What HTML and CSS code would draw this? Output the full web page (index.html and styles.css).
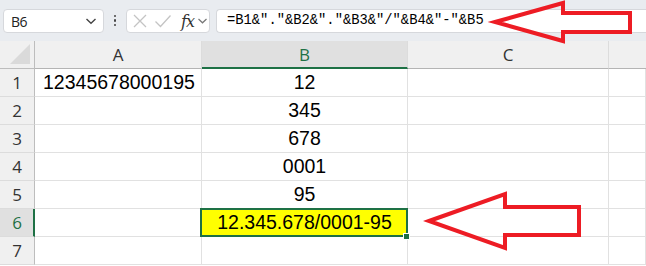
FILE: index.html
```html
<!DOCTYPE html>
<html>
<head>
<meta charset="utf-8">
<link rel="stylesheet" href="styles.css">
</head>
<body>
<div class="app">
  <div class="toolbar">
    <div class="namebox">
      <span class="nb-text">B6</span>
      <svg class="chev" width="12" height="8" viewBox="0 0 12 8"><path d="M1.5 2 L6 6.2 L10.5 2" fill="none" stroke="#444" stroke-width="1.4"/></svg>
    </div>
    <div class="dots"><i></i><i></i><i></i></div>
    <div class="fxbox">
      <svg width="16" height="16" viewBox="0 0 16 16"><path d="M2 2 L14 14 M14 2 L2 14" stroke="#c4c4c4" stroke-width="1.3" fill="none"/></svg>
      <svg width="18" height="16" viewBox="0 0 18 16"><path d="M1.5 8.5 L6.5 13.5 L16.5 2.5" stroke="#c4c4c4" stroke-width="1.3" fill="none"/></svg>
      <span class="fx">fx</span>
      <svg class="chev2" width="11" height="8" viewBox="0 0 11 8"><path d="M1.5 2 L5.5 5.8 L9.5 2" fill="none" stroke="#777" stroke-width="1.2"/></svg>
    </div>
    <div class="formula">=B1&amp;"."&amp;B2&amp;"."&amp;B3&amp;"/"&amp;B4&amp;"-"&amp;B5</div>
  </div>
  <div class="sheet">
    <div class="corner"><span class="tri"></span></div>
    <div class="colhead">A</div>
    <div class="colhead sel">B</div>
    <div class="colhead">C</div>
    <div class="colhead last"></div>

    <div class="rowhead">1</div><div class="cell left">12345678000195</div><div class="cell center">12</div><div class="cell"></div><div class="cell"></div>
    <div class="rowhead">2</div><div class="cell"></div><div class="cell center">345</div><div class="cell"></div><div class="cell"></div>
    <div class="rowhead">3</div><div class="cell"></div><div class="cell center">678</div><div class="cell"></div><div class="cell"></div>
    <div class="rowhead">4</div><div class="cell"></div><div class="cell center">0001</div><div class="cell"></div><div class="cell"></div>
    <div class="rowhead">5</div><div class="cell"></div><div class="cell center">95</div><div class="cell"></div><div class="cell"></div>
    <div class="rowhead sel">6</div><div class="cell"></div><div class="cell center active">12.345.678/0001-95</div><div class="cell"></div><div class="cell"></div>
    <div class="rowhead">7</div><div class="cell"></div><div class="cell"></div><div class="cell"></div><div class="cell"></div>
  </div>
  <svg class="arrows" width="646" height="266" viewBox="0 0 646 266">
    <polygon points="495,22 563,3 563,13 630,13 630,32 563,32 563,41" fill="none" stroke="#ed1c24" stroke-width="4" stroke-linejoin="miter"/>
    <polygon points="429,221 505,194 505,207 579,207 579,235 505,235 505,248" fill="none" stroke="#ed1c24" stroke-width="4" stroke-linejoin="miter"/>
  </svg>
</div>
</body>
</html>
```
FILE: styles.css
```css
html, body {
  margin: 0;
  padding: 0;
  background: #ffffff;
}
.app {
  position: relative;
  width: 646px;
  height: 266px;
  overflow: hidden;
  font-family: "Open Sans", "Noto Sans", sans-serif;
}
.toolbar {
  height: 41px;
  background: #e9ecf0;
  display: flex;
  align-items: center;
  padding-left: 3px;
  box-sizing: border-box;
}
.namebox {
  width: 101px;
  height: 24px;
  box-sizing: border-box;
  background: #fff;
  border: 1px solid #d6d8dc;
  border-radius: 4px;
  display: flex;
  align-items: center;
  justify-content: space-between;
  padding: 0 6px 0 7px;
  margin-top: 1px;
}
.nb-text {
  font-size: 14px;
  color: #222;
  letter-spacing: -0.5px;
}
.dots {
  width: 22px;
  display: flex;
  flex-direction: column;
  align-items: center;
  gap: 2px;
}
.dots i {
  display: block;
  width: 2.5px;
  height: 2.5px;
  background: #444;
  border-radius: 1px;
}
.fxbox {
  width: 84px;
  height: 24px;
  box-sizing: border-box;
  background: #fff;
  border: 1px solid #d6d8dc;
  border-radius: 4px;
  display: flex;
  align-items: center;
  padding-left: 5px;
  gap: 6px;
  margin-top: 1px;
}
.fx {
  font-family: "DejaVu Serif", "Liberation Serif", serif;
  font-style: italic;
  font-size: 16px;
  color: #333;
  margin-left: 3px;
  letter-spacing: -1px;
}
.chev2 {
  margin-left: -3px;
}
.formula {
  margin-left: 6px;
  flex: 1;
  height: 24px;
  box-sizing: border-box;
  background: #fff;
  border: 1px solid #d6d8dc;
  border-right: none;
  border-radius: 4px 0 0 4px;
  margin-top: 1px;
  padding-left: 10px;
  font-family: "Liberation Mono", monospace;
  font-size: 13.8px;
  line-height: 22px;
  color: #000;
  white-space: nowrap;
}
.sheet {
  display: grid;
  grid-template-columns: 35px 167px 206px 201px 1fr;
  grid-auto-rows: 28px;
}
.corner {
  position: relative;
  background: #f0f0f0;
  border-right: 1px solid #bdbdbd;
  border-bottom: 1px solid #bdbdbd;
  box-sizing: border-box;
}
.tri {
  position: absolute;
  right: 4px;
  bottom: 4px;
  width: 0;
  height: 0;
  border-left: 20px solid transparent;
  border-bottom: 20px solid #dadada;
}
.colhead {
  background: #f0f0f0;
  border-right: 1px solid #dcdcdc;
  border-bottom: 1px solid #b4b4b4;
  box-sizing: border-box;
  display: flex;
  align-items: center;
  justify-content: center;
  font-size: 17px;
  color: #333;
}
.colhead.sel {
  background: #e0e0e0;
  color: #1e7145;
  border-bottom: 2px solid #1e7145;
  padding-top: 1px;
}
.colhead.last {
  border-right: none;
}
.rowhead {
  background: #f0f0f0;
  border-right: 1px solid #bdbdbd;
  border-bottom: 1px solid #dcdcdc;
  box-sizing: border-box;
  display: flex;
  align-items: center;
  justify-content: center;
  font-size: 17px;
  color: #333;
}
.rowhead.sel {
  background: #e0e0e0;
  color: #1e7145;
  border-right: 2px solid #1e7145;
  padding-left: 1px;
}
.cell {
  border-right: 1px solid #e1e1e1;
  border-bottom: 1px solid #e1e1e1;
  box-sizing: border-box;
  font-family: "Liberation Sans", Arial, sans-serif;
  font-size: 19.5px;
  color: #000;
  display: flex;
  align-items: center;
  white-space: nowrap;
}
.cell.left {
  padding-left: 8px;
}
.cell.center {
  justify-content: center;
}
.cell.active {
  position: relative;
  background: #ffff00;
}
.cell.active::before {
  content: "";
  position: absolute;
  left: -2px;
  top: -1px;
  right: -1px;
  bottom: -1px;
  border: 2px solid #1e7145;
  pointer-events: none;
}
.cell.active::after {
  content: "";
  position: absolute;
  right: -3px;
  bottom: -4px;
  width: 5px;
  height: 5px;
  background: #1e7145;
  border: 1px solid #fff;
}
.arrows {
  position: absolute;
  left: 0;
  top: 0;
  pointer-events: none;
}
```
